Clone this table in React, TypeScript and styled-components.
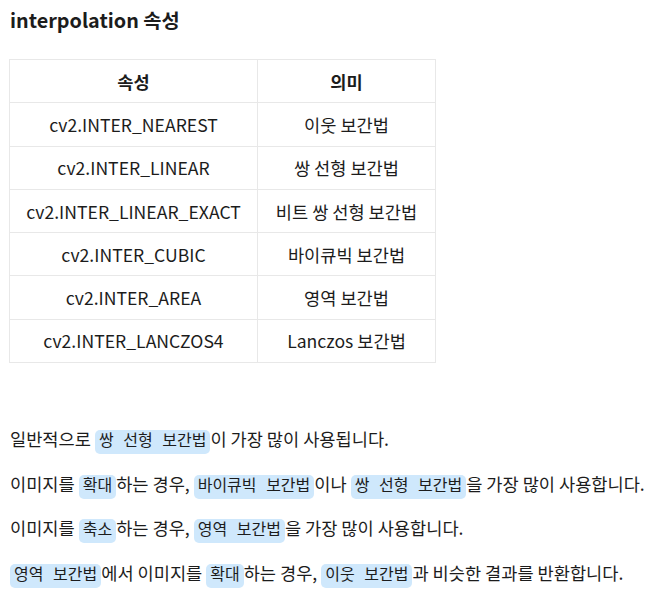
import React from 'react';
import styled, { createGlobalStyle } from 'styled-components';

const GlobalStyle = createGlobalStyle`
  body {
    margin: 0;
    background: #fff;
    color: #1c1c1c;
    font-family: "Noto Sans CJK KR", "Noto Sans", sans-serif;
  }
`;

const Page = styled.div`
  padding: 5px 0 0 9px;
`;

const Title = styled.h3`
  margin: 0 0 24px 1px;
  font-size: 19.8px;
  font-weight: 700;
  line-height: 30px;
`;

const Table = styled.table`
  border-collapse: collapse;
  font-size: 17.6px;
  margin-bottom: 62px;
`;

const Th = styled.th`
  border: 1px solid #e8e8e8;
  height: 42.3px;
  padding: 0 10px;
  font-weight: 700;
  text-align: center;
`;

const Td = styled.td<{ wide?: boolean }>`
  border: 1px solid #e8e8e8;
  height: 42.3px;
  padding: 0 10px;
  text-align: center;
  width: ${p => (p.wide ? '227px' : '157px')};
`;

const Para = styled.p`
  margin: 0 0 16px 1px;
  font-size: 17.6px;
  line-height: 28.7px;
`;

const Code = styled.code`
  font-family: "Liberation Mono", "Noto Sans CJK KR", monospace;
  font-size: 16px;
  line-height: 1;
  background: #cfe8fc;
  border-radius: 5px;
  padding: 3px 4px;
`;

const rows: [string, string][] = [
  ['cv2.INTER_NEAREST', '이웃 보간법'],
  ['cv2.INTER_LINEAR', '쌍 선형 보간법'],
  ['cv2.INTER_LINEAR_EXACT', '비트 쌍 선형 보간법'],
  ['cv2.INTER_CUBIC', '바이큐빅 보간법'],
  ['cv2.INTER_AREA', '영역 보간법'],
  ['cv2.INTER_LANCZOS4', 'Lanczos 보간법'],
];

export default function App() {
  return (
    <Page>
      <GlobalStyle />
      <Title>interpolation 속성</Title>
      <Table>
        <thead>
          <tr>
            <Th>속성</Th>
            <Th>의미</Th>
          </tr>
        </thead>
        <tbody>
          {rows.map(([name, desc]) => (
            <tr key={name}>
              <Td wide>{name}</Td>
              <Td>{desc}</Td>
            </tr>
          ))}
        </tbody>
      </Table>
      <Para>
        일반적으로 <Code>쌍 선형 보간법</Code>이 가장 많이 사용됩니다.
      </Para>
      <Para>
        이미지를 <Code>확대</Code>하는 경우, <Code>바이큐빅 보간법</Code>이나{' '}
        <Code>쌍 선형 보간법</Code>을 가장 많이 사용합니다.
      </Para>
      <Para>
        이미지를 <Code>축소</Code>하는 경우, <Code>영역 보간법</Code>을 가장 많이 사용합니다.
      </Para>
      <Para>
        <Code>영역 보간법</Code>에서 이미지를 <Code>확대</Code>하는 경우, <Code>이웃 보간법</Code>과
        비슷한 결과를 반환합니다.
      </Para>
    </Page>
  );
}
